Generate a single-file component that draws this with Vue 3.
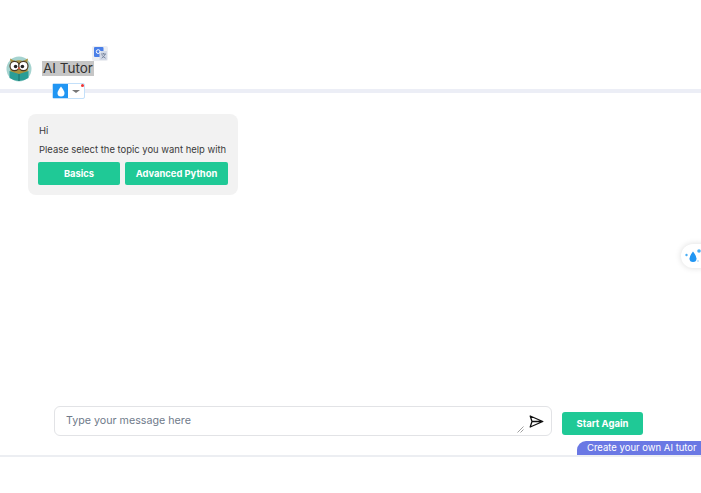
<template>
  <div class="page">
    <header class="head">
      <svg class="owl" width="26" height="26" viewBox="0 0 26 26">
        <circle cx="13" cy="13" r="12.5" fill="#a5d3cf"/>
        <path d="M5 8 L4 2.5 L9 5 Q13 3.5 17 5 L22 2.5 L21 8 Q23 14 20 20 L6 20 Q3 14 5 8Z" fill="#a8923f"/>
        <circle cx="8.6" cy="10" r="4.6" fill="#fff" stroke="#4a3a25" stroke-width="1.2"/>
        <circle cx="17.4" cy="10" r="4.6" fill="#fff" stroke="#4a3a25" stroke-width="1.2"/>
        <circle cx="9.6" cy="10.5" r="1.8" fill="#222"/>
        <circle cx="16.4" cy="10.5" r="1.8" fill="#222"/>
        <path d="M13 10.5 L11.6 13 L14.4 13Z" fill="#d2523c"/>
        <path d="M3.5 15 L13 18 L22.5 15 L22.5 22 Q13 28 3.5 22Z" fill="#2a9d96"/>
        <path d="M13 18 V25" stroke="#17706b" stroke-width="1"/>
      </svg>
      <span class="title">AI Tutor</span>
    </header>

    <main class="chat">
      <section class="card">
        <p class="hi">Hi</p>
        <p class="ask">Please select the topic you want help with</p>
        <div class="choices">
          <button class="btn basics">Basics</button>
          <button class="btn adv">Advanced Python</button>
        </div>
      </section>
    </main>

    <div class="composer">
      <div class="input">
        <span class="ph">Type your message here</span>
        <svg class="send" width="15" height="13" viewBox="0 0 15 13">
          <path d="M1.2 1 L13.8 6.5 L1.2 12 L3 6.5 Z M3 6.5 H13.8" fill="none" stroke="#111" stroke-width="1.3" stroke-linejoin="round"/>
        </svg>
        <svg class="grip" width="7" height="7" viewBox="0 0 7 7">
          <path d="M0.5 6.5 L6.5 0.5 M3.5 6.5 L6.5 3.5" stroke="#888" stroke-width="0.8"/>
        </svg>
      </div>
      <button class="btn again">Start Again</button>
    </div>
    <footer class="foot"></footer>

    <div class="translate">
      <svg width="13" height="13" viewBox="0 0 13 13">
        <rect x="0" y="0" width="9.5" height="10" rx="1" fill="#4a7fe8"/>
        <rect x="5.5" y="4" width="7.5" height="9" rx="0.5" fill="#d3d9e6"/>
        <circle cx="4.2" cy="4.6" r="1.9" fill="none" stroke="#fff" stroke-width="1"/>
        <path d="M7 7 H12 M9.5 6 V7 M11.2 7 Q10.2 10 7.6 11.2 M8 8.2 Q9.4 10.2 11.6 11.2" stroke="#6b7a94" stroke-width="0.8" fill="none"/>
      </svg>
    </div>

    <div class="drop">
      <span class="drop-l">
        <svg width="8" height="11" viewBox="0 0 8 11"><path d="M4 0.5 Q7.5 5 7.5 7 A3.5 3.5 0 0 1 0.5 7 Q0.5 5 4 0.5Z" fill="#fff"/></svg>
      </span>
      <span class="drop-r"><i class="caret"></i><i class="dot"></i></span>
    </div>

    <div class="side">
      <svg width="18" height="16" viewBox="0 0 18 16">
        <path d="M8 3.5 Q11.5 8 11.5 10.5 A3.5 3.5 0 0 1 4.5 10.5 Q4.5 8 8 3.5Z" fill="#2196f3"/>
        <circle cx="14" cy="3" r="1.8" fill="#49aef5"/>
        <circle cx="1.5" cy="7" r="1.2" fill="#49aef5"/>
        <circle cx="13" cy="13" r="0.8" fill="#8cc9f7"/>
      </svg>
    </div>

    <div class="create">Create your own AI tutor</div>
  </div>
</template>

<script setup>
</script>

<style>
html, body { margin: 0; background: #fff; }
</style>

<style scoped>
.page {
  position: relative;
  width: 701px;
  height: 493px;
  overflow: hidden;
  background: #fff;
  display: flex;
  flex-direction: column;
  font-family: "Inter", "Liberation Sans", sans-serif;
  color: #333;
}
.head {
  height: 89px;
  box-sizing: border-box;
  padding: 55px 0 0 6px;
  display: flex;
  align-items: flex-start;
  gap: 10px;
}
.chat {
  border-top: 4px solid #eceef6;
  padding: 21px 0 0 28px;
  height: 317px;
  box-sizing: border-box;
}
.owl { flex: none; margin-top: 1px; }
.title {
  margin-top: 6px;
  background: #c6c6c6;
  color: #333;
  font-size: 13.5px;
  line-height: 15px;
  padding: 0 1px;
}
.card {
  width: 210px;
  height: 81px;
  box-sizing: border-box;
  background: #f2f2f2;
  border-radius: 8px;
  padding: 11px 10px 11px 11px;
}
.hi, .ask {
  margin: 0;
  font-size: 9.45px;
  line-height: 12px;
  color: #3a3a3a;
}
.ask { margin-top: 7px; white-space: nowrap; }
.choices {
  margin-top: 6px;
  margin-left: -1px;
  display: flex;
  gap: 5px;
}
.btn {
  flex: none;
  border: 0;
  border-radius: 2px;
  background: #1fc996;
  color: #fff;
  font-family: inherit;
  font-weight: 700;
  font-size: 9.4px;
  padding: 0;
  height: 23px;
  white-space: nowrap;
}
.basics { width: 82px; }
.adv { width: 103px; }
.composer {
  display: flex;
  align-items: flex-start;
  gap: 10px;
  padding-left: 54px;
  height: 49px;
}
.input {
  position: relative;
  width: 498px;
  height: 30px;
  box-sizing: border-box;
  border: 1px solid #e2e3e6;
  border-radius: 6px;
  padding: 7px 11px;
  font-size: 10.7px;
  line-height: 14px;
}
.ph { color: #6f7a8a; }
.send { position: absolute; right: 7px; top: 8px; }
.grip { position: absolute; right: 27px; bottom: 2px; }
.again {
  width: 81px;
  height: 23px;
  margin-top: 6px;
  border-radius: 3px;
  font-size: 9.5px;
}
.foot {
  height: 2px;
  background: #eceef2;
}
.translate {
  position: absolute;
  left: 92px;
  top: 46px;
  width: 16px;
  height: 15px;
  background: #eceef2;
  display: flex;
  align-items: center;
  justify-content: center;
  border-radius: 2px;
}
.drop {
  position: absolute;
  left: 52px;
  top: 83px;
  width: 33px;
  height: 16px;
  display: flex;
  box-sizing: border-box;
  border: 1px solid #c3e0fa;
  border-radius: 2px;
  background: #fff;
}
.drop-l {
  width: 15px;
  background: #2196f3;
  display: flex;
  align-items: center;
  justify-content: center;
}
.drop-r { flex: 1; position: relative; }
.caret {
  position: absolute;
  left: 4px;
  top: 6px;
  border-left: 4px solid transparent;
  border-right: 4px solid transparent;
  border-top: 3px solid #777;
}
.dot {
  position: absolute;
  right: 0;
  top: 0;
  width: 3px;
  height: 3px;
  border-radius: 50%;
  background: #e33;
}
.side {
  position: absolute;
  left: 681px;
  top: 244px;
  width: 32px;
  height: 24px;
  border-radius: 12px;
  background: #fff;
  box-shadow: 0 0 6px rgba(0, 0, 0, 0.14);
  padding: 4px 0 0 4px;
  box-sizing: border-box;
}
.create {
  position: absolute;
  left: 577px;
  top: 441px;
  width: 124px;
  height: 14px;
  box-sizing: border-box;
  background: #6a78e4;
  border-radius: 9px 0 0 0;
  color: #fff;
  font-size: 9.5px;
  line-height: 14px;
  padding-left: 10px;
  white-space: nowrap;
}
</style>
